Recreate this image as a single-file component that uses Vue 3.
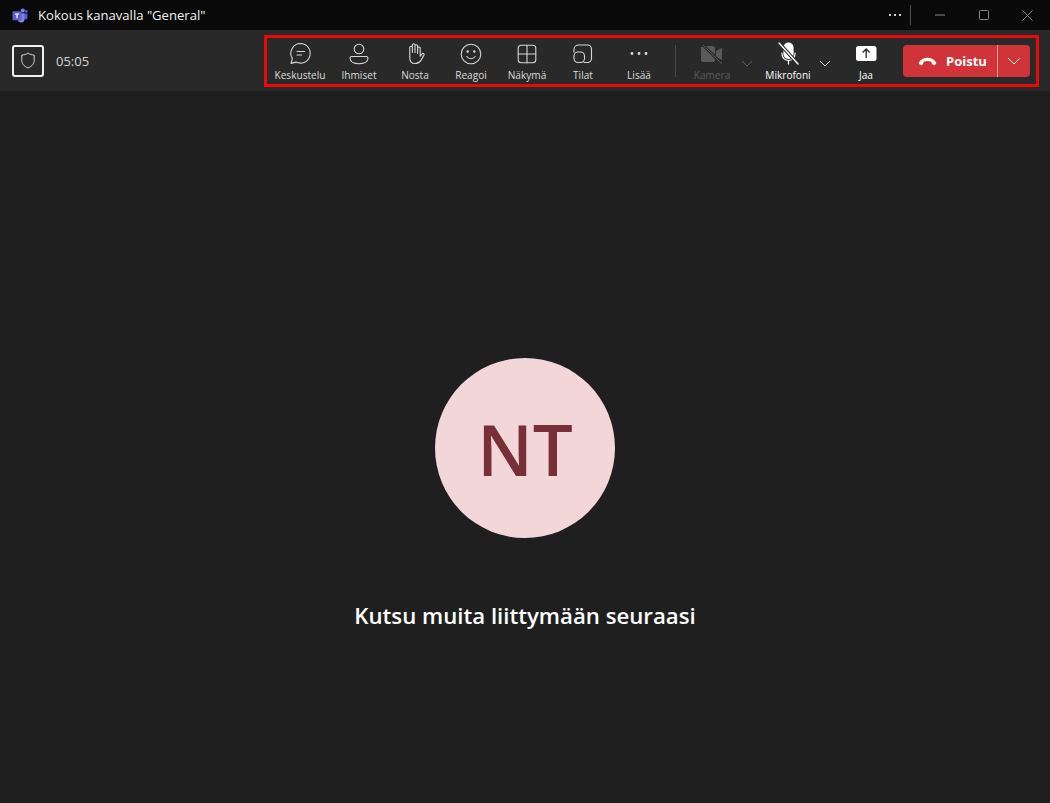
<script setup>
const tools = [
  { label: 'Keskustelu', icon: 'chat', wide: true },
  { label: 'Ihmiset', icon: 'people' },
  { label: 'Nosta', icon: 'hand' },
  { label: 'Reagoi', icon: 'smile' },
  { label: 'Näkymä', icon: 'grid' },
  { label: 'Tilat', icon: 'rooms' },
  { label: 'Lisää', icon: 'more' }
]
</script>

<template>
  <div class="app">
    <header class="titlebar">
      <svg class="teams-logo" width="16" height="16" viewBox="0 0 16 16">
        <circle cx="10.800" cy="3.400" r="2" fill="#7b83eb" />
        <circle cx="14.200" cy="4.400" r="1.400" fill="#5059c9" />
        <path d="M11.600 6.400h3.900v4.200a2 2 0 0 1-2 2h-1.900z" fill="#5059c9" />
        <path d="M6 6.200h6.400v6a3.200 3.200 0 0 1-6.400 0z" fill="#7b83eb" />
        <rect x="0.500" y="4.200" width="9" height="9" rx="1" fill="#5b5fc7" />
        <path d="M2.800 6.400h4.400v1.100H5.600v3.700H4.400V7.500H2.800z" fill="#fff" />
      </svg>
      <span class="title">Kokous kanavalla "General"</span>
      <div class="window-actions">
        <span class="dots"><i></i><i></i><i></i></span>
        <span class="sep"></span>
        <svg class="win-btn min" width="10" height="10" viewBox="0 0 10 10"><path d="M0 5h10" stroke="#8a8a8a" fill="none" /></svg>
        <svg class="win-btn max" width="10" height="10" viewBox="0 0 10 10"><rect x="0.5" y="0.5" width="9" height="9" rx="1" stroke="#8a8a8a" fill="none" /></svg>
        <svg class="win-btn close" width="11" height="11" viewBox="0 0 11 11"><path d="M.5.5l10 10M10.500.5l-10 10" stroke="#8a8a8a" fill="none" /></svg>
      </div>
    </header>

    <div class="toolbar">
      <div class="meeting-info">
        <span class="shield-box">
          <svg width="16" height="17" viewBox="0 0 16 17" fill="none" stroke="#d6d6d6" stroke-width="1">
            <path d="M8 1c1.800 1.300 3.800 2 6.200 2.100v5.200c0 3.400-2 5.900-6.200 7.600C3.800 14.200 1.800 11.700 1.800 8.300V3.100C4.200 3 6.200 2.300 8 1z" />
          </svg>
        </span>
        <span class="timer">05:05</span>
      </div>

      <div class="controls">
        <button v-for="t in tools" :key="t.label" class="tool" :class="{ wide: t.wide }">
          <svg class="tool-icon" width="24" height="24" viewBox="0 0 24 24" fill="none" stroke="#d6d6d6" stroke-width="1.1" stroke-linecap="round" stroke-linejoin="round">
            <template v-if="t.icon === 'chat'">
              <path d="M12.500 2.500a9.800 9.800 0 1 1-4.400 18.600l-5.100 1.300 1.400-4.800A9.800 9.800 0 0 1 12.500 2.500z" />
              <path d="M9 10.500h7.500M9 14h4.500" />
            </template>
            <template v-else-if="t.icon === 'people'">
              <circle cx="12" cy="8" r="4.800" />
              <path d="M4.800 15.500h14.400a1.800 1.800 0 0 1 1.800 1.800c0 3.300-3.800 5.400-9 5.400s-9-2.100-9-5.400a1.800 1.800 0 0 1 1.800-1.800z" />
            </template>
            <template v-else-if="t.icon === 'hand'">
              <path d="M6.800 14V6.500a1.300 1.300 0 0 1 2.600 0v5V4a1.300 1.300 0 0 1 2.600 0v7.500V5a1.300 1.300 0 0 1 2.600 0v7.500l.1-5.500a1.300 1.300 0 0 1 2.500 0v8.300l1.700-2.300c1.100-1.300 2.900.1 2 1.400l-3 5c-1.300 2-3 3.100-5.600 3.100-3.700 0-5.500-2-5.500-5.500z" />
            </template>
            <template v-else-if="t.icon === 'smile'">
              <circle cx="12" cy="13" r="9.800" />
              <circle cx="8.700" cy="10.600" r="0.700" fill="#d6d6d6" />
              <circle cx="15.300" cy="10.600" r="0.700" fill="#d6d6d6" />
              <path d="M7.800 15.500c2.200 2.900 6.200 2.900 8.400 0" />
            </template>
            <template v-else-if="t.icon === 'grid'">
              <rect x="3.200" y="4.200" width="17.600" height="17.600" rx="3" />
              <path d="M12 4.200v17.600M3.200 13h17.600" />
            </template>
            <template v-else-if="t.icon === 'rooms'">
              <path d="M3 11V8.500A4.500 4.500 0 0 1 7.500 4H16.500a4 4 0 0 1 4 4v9.500a4 4 0 0 1-4 4h-3.500" />
              <rect x="3" y="11" width="10.500" height="10.500" rx="4" />
            </template>
            <template v-else>
              <circle cx="5" cy="12.500" r="0.900" fill="#d6d6d6" />
              <circle cx="12" cy="12.500" r="0.900" fill="#d6d6d6" />
              <circle cx="19" cy="12.500" r="0.900" fill="#d6d6d6" />
            </template>
          </svg>
          <span class="tool-label">{{ t.label }}</span>
        </button>

        <span class="divider"></span>

        <button class="tool disabled">
          <svg class="tool-icon" width="24" height="24" viewBox="0 0 24 24">
            <rect x="1" y="5" width="14" height="16" rx="2.500" fill="#5a5a5a" />
            <path d="M16 10l6-3v12l-6-3z" fill="#5a5a5a" />
            <path d="M3 4l19 19" stroke="#292929" stroke-width="3" />
            <path d="M3 4l19 19" stroke="#5a5a5a" stroke-width="1" />
          </svg>
          <span class="tool-label">Kamera</span>
        </button>
        <svg class="chevron cam-chev" width="12" height="7" viewBox="0 0 12 7" fill="none" stroke="#5f5f5f"><path d="M1 1l5 5 5-5" /></svg>

        <button class="tool active">
          <svg class="tool-icon" width="24" height="24" viewBox="0 0 24 24" fill="none" stroke="#fff" stroke-width="1.200" stroke-linecap="round">
            <path d="M8 13V6.500a4.500 4.500 0 0 1 9 0V13a4.500 4.500 0 0 1-9 0z" fill="#fff" />
            <path d="M6 12v1a6.500 6.500 0 0 0 13 0v-1M12.500 19.500v3.500" />
            <path d="M3 2l19 21" stroke="#292929" stroke-width="3.400" />
            <path d="M3 2l19 21" stroke-width="1.400" />
          </svg>
          <span class="tool-label">Mikrofoni</span>
        </button>
        <svg class="chevron mic-chev" width="12" height="7" viewBox="0 0 12 7" fill="none" stroke="#d6d6d6"><path d="M1 1l5 5 5-5" /></svg>

        <button class="tool active">
          <svg class="tool-icon" width="24" height="24" viewBox="0 0 24 24">
            <rect x="2" y="5" width="20.500" height="15" rx="2.500" fill="#fff" />
            <path d="M12.200 17V8.500M8.700 11.500l3.500-3.500 3.500 3.500" stroke="#292929" stroke-width="1.300" fill="none" />
          </svg>
          <span class="tool-label">Jaa</span>
        </button>

        <div class="leave">
          <button class="leave-main">
            <svg width="19" height="10" viewBox="0 0 20 10">
              <path d="M1 6.500C3 3 6.200 1.500 10 1.500s7 1.500 9 5c.4.800.2 1.500-.5 2l-1 .7c-.8.500-1.600.3-2.100-.4l-.9-1.500c-.3-.5-.4-1-.4-1.600-2.500-.8-5.700-.8-8.200 0 0 .6-.1 1.100-.4 1.600l-.9 1.500c-.5.700-1.300.9-2.100.4l-1-.7c-.7-.5-.9-1.200-.5-2z" fill="#fff" />
            </svg>
            <span>Poistu</span>
          </button>
          <button class="leave-more">
            <svg width="14" height="8" viewBox="0 0 14 8" fill="none" stroke="#fff"><path d="M1 1l6 6 6-6" /></svg>
          </button>
        </div>
      </div>
    </div>

    <main class="stage">
      <div class="avatar">NT</div>
      <h1 class="invite">Kutsu muita liittymään seuraasi</h1>
    </main>
  </div>
</template>

<style>
html, body {
  margin: 0;
  background: #1f1f1f;
}
</style>

<style scoped>
.app {
  width: 1050px;
  height: 803px;
  display: flex;
  flex-direction: column;
  overflow: hidden;
  background: #1f1f1f;
  font-family: "Open Sans", "Noto Sans", sans-serif;
}

button {
  border: 0;
  padding: 0;
  background: none;
  font-family: inherit;
  color: inherit;
}

.titlebar {
  height: 30px;
  flex: none;
  display: flex;
  align-items: center;
  padding-left: 12px;
  background: #0a0a0a;
}

.teams-logo {
  margin-right: 10px;
}

.title {
  font-size: 13.1px;
  color: #f2f2f2;
}

.window-actions {
  margin-left: auto;
  display: flex;
  align-items: center;
}

.dots {
  display: flex;
  gap: 3px;
  margin-right: 9px;
}

.dots i {
  width: 2px;
  height: 2px;
  background: #d0d0d0;
}

.sep {
  width: 1px;
  height: 20px;
  background: #4d4d4d;
}

.win-btn.min {
  margin-left: 24px;
}

.win-btn.max {
  margin-left: 34px;
}

.win-btn.close {
  margin-left: 33px;
  margin-right: 17px;
}

.toolbar {
  height: 61px;
  flex: none;
  display: flex;
  align-items: center;
  background: #292929;
  box-sizing: border-box;
  padding-left: 12px;
}

.meeting-info {
  display: flex;
  align-items: center;
  width: 252px;
}

.shield-box {
  width: 32px;
  height: 32px;
  box-sizing: border-box;
  border: 2px solid #f0f0f0;
  border-radius: 3px;
  display: flex;
  align-items: center;
  justify-content: center;
}

.timer {
  margin-left: 12px;
  margin-top: 1px;
  font-size: 13px;
  color: #d6d6d6;
}

.controls {
  width: 775px;
  height: 52px;
  box-sizing: border-box;
  border: 3px solid #e60a0a;
  display: flex;
  align-items: center;
  padding-left: 2px;
}

.tool {
  width: 56px;
  height: 46px;
  flex: none;
  display: flex;
  flex-direction: column;
  align-items: center;
  color: #dcdcdc;
}

.tool.wide {
  width: 62px;
}

.tool-icon {
  display: block;
  margin-top: 3px;
}

.tool-label {
  margin-top: 3px;
  font-size: 10.1px;
  line-height: 14px;
  white-space: nowrap;
}

.tool.disabled {
  color: #5a5a5a;
}

.tool.active {
  color: #fff;
}

.divider {
  width: 1px;
  height: 32px;
  margin: 0 8px;
  background: #4a4a4a;
}

.chevron {
  flex: none;
  margin-top: 6px;
}

.cam-chev {
  margin-left: 1px;
  margin-right: 7px;
}

.mic-chev {
  margin-left: 3px;
  margin-right: 7px;
}

.leave {
  margin-left: 9px;
  width: 127px;
  height: 32px;
  display: flex;
  background: #d13438;
  border-radius: 4px;
  color: #fff;
}

.leave-main {
  width: 94px;
  box-sizing: border-box;
  padding-left: 15px;
  display: flex;
  align-items: center;
  gap: 9px;
  font-size: 13px;
  font-weight: 700;
}

.leave-more {
  flex: 1;
  display: flex;
  align-items: center;
  justify-content: center;
  border-left: 1px solid #e8a0a2;
}

.stage {
  flex: 1;
  display: flex;
  flex-direction: column;
  align-items: center;
  padding-top: 267px;
}

.avatar {
  width: 180px;
  height: 180px;
  border-radius: 50%;
  display: flex;
  align-items: center;
  justify-content: center;
  background: #f3d6d8;
  color: #772f38;
  font-size: 71px;
  font-weight: 600;
  line-height: 1;
}

.invite {
  margin: 64px 0 0;
  font-size: 22.2px;
  line-height: 28px;
  font-weight: 600;
  color: #fff;
}
</style>
